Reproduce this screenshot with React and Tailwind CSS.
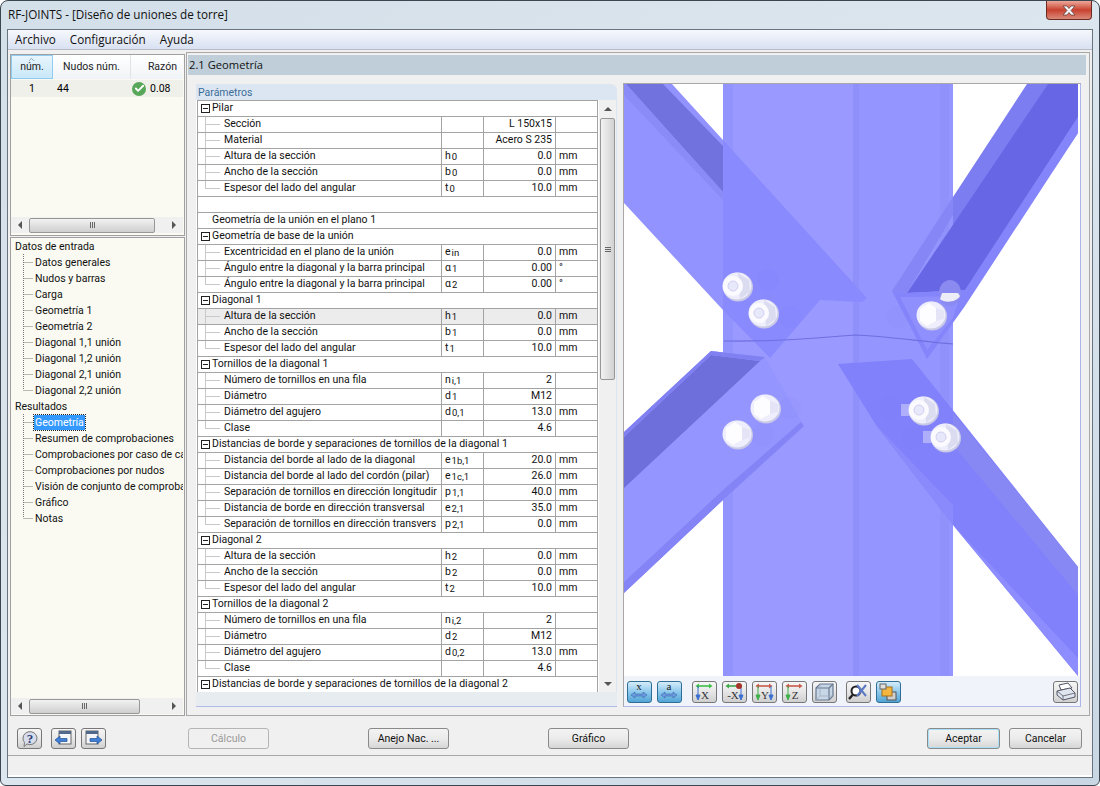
import { Check, ChevronUp } from "lucide-react";

const TREE = [
  { label: "Datos de entrada", root: true },
  { label: "Datos generales" },
  { label: "Nudos y barras" },
  { label: "Carga" },
  { label: "Geometría 1" },
  { label: "Geometría 2" },
  { label: "Diagonal 1,1 unión" },
  { label: "Diagonal 1,2 unión" },
  { label: "Diagonal 2,1 unión" },
  { label: "Diagonal 2,2 unión", last: true },
  { label: "Resultados", root: true },
  { label: "Geometría", active: true },
  { label: "Resumen de comprobaciones" },
  { label: "Comprobaciones por caso de ca" },
  { label: "Comprobaciones por nudos" },
  { label: "Visión de conjunto de comproba" },
  { label: "Gráfico" },
  { label: "Notas", last: true },
];

// kind: g = group header, p = plain text, b = blank, otherwise a parameter row
const ROWS = [
  { kind: "g", name: "Pilar" },
  { name: "Sección", value: "L 150x15" },
  { name: "Material", value: "Acero S 235" },
  { name: "Altura de la sección", s: "h", sub: "0", value: "0.0", unit: "mm" },
  { name: "Ancho de la sección", s: "b", sub: "0", value: "0.0", unit: "mm" },
  { name: "Espesor del lado del angular", s: "t", sub: "0", value: "10.0", unit: "mm", last: true },
  { kind: "b" },
  { kind: "p", name: "Geometría de la unión en el plano 1" },
  { kind: "g", name: "Geometría de base de la unión" },
  { name: "Excentricidad en el plano de la unión", s: "e", sub: "in", value: "0.0", unit: "mm" },
  { name: "Ángulo entre la diagonal y la barra principal", s: "α", sub: "1", value: "0.00", unit: "°" },
  { name: "Ángulo entre la diagonal y la barra principal", s: "α", sub: "2", value: "0.00", unit: "°", last: true },
  { kind: "g", name: "Diagonal 1" },
  { name: "Altura de la sección", s: "h", sub: "1", value: "0.0", unit: "mm", selected: true },
  { name: "Ancho de la sección", s: "b", sub: "1", value: "0.0", unit: "mm" },
  { name: "Espesor del lado del angular", s: "t", sub: "1", value: "10.0", unit: "mm", last: true },
  { kind: "g", name: "Tornillos de la diagonal 1" },
  { name: "Número de tornillos en una fila", s: "n", sub: "i,1", value: "2" },
  { name: "Diámetro", s: "d", sub: "1", value: "M12" },
  { name: "Diámetro del agujero", s: "d", sub: "0,1", value: "13.0", unit: "mm" },
  { name: "Clase", value: "4.6", last: true },
  { kind: "g", name: "Distancias de borde y separaciones de tornillos de la diagonal 1" },
  { name: "Distancia del borde al lado de la diagonal", s: "e", sub: "1b,1", value: "20.0", unit: "mm" },
  { name: "Distancia del borde al lado del cordón (pilar)", s: "e", sub: "1c,1", value: "26.0", unit: "mm" },
  { name: "Separación de tornillos en dirección longitudir", s: "p", sub: "1,1", value: "40.0", unit: "mm" },
  { name: "Distancia de borde en dirección transversal", s: "e", sub: "2,1", value: "35.0", unit: "mm" },
  { name: "Separación de tornillos en dirección transvers", s: "p", sub: "2,1", value: "0.0", unit: "mm", last: true },
  { kind: "g", name: "Diagonal 2" },
  { name: "Altura de la sección", s: "h", sub: "2", value: "0.0", unit: "mm" },
  { name: "Ancho de la sección", s: "b", sub: "2", value: "0.0", unit: "mm" },
  { name: "Espesor del lado del angular", s: "t", sub: "2", value: "10.0", unit: "mm", last: true },
  { kind: "g", name: "Tornillos de la diagonal 2" },
  { name: "Número de tornillos en una fila", s: "n", sub: "i,2", value: "2" },
  { name: "Diámetro", s: "d", sub: "2", value: "M12" },
  { name: "Diámetro del agujero", s: "d", sub: "0,2", value: "13.0", unit: "mm" },
  { name: "Clase", value: "4.6", last: true },
  { kind: "g", name: "Distancias de borde y separaciones de tornillos de la diagonal 2" },
];

const GHOST_NUTS = [
  [768, 280],
  [790, 317],
  [898, 317],
  [790, 408],
  [763, 435],
  [890, 408],
  [913, 438],
];

function HScroll({ thumb }) {
  return (
    <div className="flex h-[16px] shrink-0 items-center bg-[#f0f0f0]">
      <div className="flex w-[18px] justify-center">
        <div className="h-0 w-0 border-y-[4px] border-r-[4px] border-y-transparent border-r-[#555]" />
      </div>
      <div className={`flex h-[15px] items-center justify-center rounded-[2px] border border-[#979797] bg-gradient-to-b from-[#f2f2f2] to-[#cfcfcf] ${thumb}`}>
        <div className="flex gap-[1px]">
          <div className="h-[6px] w-[1px] bg-[#666]" />
          <div className="h-[6px] w-[1px] bg-[#666]" />
          <div className="h-[6px] w-[1px] bg-[#666]" />
        </div>
      </div>
      <div className="ml-auto flex w-[18px] justify-center">
        <div className="h-0 w-0 border-y-[4px] border-l-[4px] border-y-transparent border-l-[#555]" />
      </div>
    </div>
  );
}

function VScroll() {
  return (
    <div className="flex w-[17px] flex-col items-center bg-[#f0f0f0]">
      <div className="flex h-[18px] items-center">
        <div className="h-0 w-0 border-x-[4px] border-b-[4px] border-x-transparent border-b-[#555]" />
      </div>
      <div className="flex h-[262px] w-[15px] flex-col items-center justify-center gap-[1px] rounded-[2px] border border-[#979797] bg-gradient-to-r from-[#f2f2f2] to-[#d2d2d2]">
        <div className="h-[1px] w-[6px] bg-[#666]" />
        <div className="h-[1px] w-[6px] bg-[#666]" />
        <div className="h-[1px] w-[6px] bg-[#666]" />
      </div>
      <div className="mt-auto flex h-[16px] items-center">
        <div className="h-0 w-0 border-x-[4px] border-t-[4px] border-x-transparent border-t-[#555]" />
      </div>
    </div>
  );
}

function TreeItem({ item }) {
  if (item.root) {
    return <div className="h-[16px] pl-[4px] leading-[17px]">{item.label}</div>;
  }
  return (
    <div className="flex h-[16px] items-center whitespace-nowrap leading-[15px]">
      <svg width="23" height="16" className="shrink-0">
        <path d={`M12.5 0V${item.last ? 8 : 16}M12.5 8.5H22`} stroke="#777" strokeDasharray="1 1" fill="none" />
      </svg>
      {item.active ? (
        <span className="bg-[#3399ff] px-[1px] text-white outline outline-1 outline-dotted outline-[#222]">{item.label}</span>
      ) : (
        <span className="px-[1px]">{item.label}</span>
      )}
    </div>
  );
}

function LeftColumn() {
  return (
    <div className="flex w-[175px] shrink-0 flex-col gap-[1px] pt-[2px]">
      <div className="flex h-[182px] shrink-0 flex-col border border-[#a0a0a0] bg-[#fafaf2] pb-[2px] pr-[1px]">
        <div className="flex h-[24px] shrink-0 bg-gradient-to-b from-[#ffffff] to-[#f0f3f7] text-[#222]">
          <div className="relative flex w-[42px] items-end justify-center border border-[#8fcdf0] bg-gradient-to-b from-[#e8f5fc] to-[#c9e8f9] pb-[3px]">
            <ChevronUp size={9} className="absolute left-[15px] top-[-1px] text-[#6b8fa8]" />
            núm.
          </div>
          <div className="flex w-[78px] items-end justify-center border-r border-[#e0e3e8] pb-[4px]">Nudos núm.</div>
          <div className="flex flex-1 items-end justify-end pb-[4px] pr-[6px]">Razón</div>
        </div>
        <div className="mt-[1px] flex h-[17px] shrink-0 items-center bg-[#f0f0ea]">
          <div className="w-[42px] pl-[18px]">1</div>
          <div className="w-[79px] pl-[4px]">44</div>
          <div className="flex h-[14px] w-[14px] items-center justify-center rounded-full bg-[#58a65a]">
            <Check size={11} strokeWidth={4} className="text-white" />
          </div>
          <div className="pl-[4px]">0.08</div>
        </div>
        <div className="flex-1" />
        <HScroll thumb="w-[126px]" />
      </div>
      <div className="flex min-h-0 flex-1 flex-col border border-[#a0a0a0] bg-[#fafaf2] pb-[1px] pr-[1px]">
        <div className="flex-1 overflow-hidden text-[#111]">
          {TREE.map((item) => (
            <TreeItem key={item.label} item={item} />
          ))}
        </div>
        <HScroll thumb="w-[111px]" />
      </div>
    </div>
  );
}

function RowBranch({ last }) {
  return (
    <svg width="26" height="15" className="shrink-0">
      <path d={`M7.5 0V${last ? 8 : 15}M7.5 7.5H22`} stroke="#c9c9c9" fill="none" />
    </svg>
  );
}

function GroupBox() {
  return (
    <svg width="13" height="15" className="shrink-0">
      <rect x="2.5" y="3.5" width="8" height="8" fill="#fff" stroke="#222" />
      <path d="M4 7.5H9" stroke="#222" />
    </svg>
  );
}

function ParamRow({ row }) {
  const base = "h-[16px] border-b border-[#a3a3a3] leading-[14px] whitespace-nowrap overflow-hidden";
  if (row.kind === "b") return <div className={base} />;
  if (row.kind === "p") return <div className={`${base} pl-[14px]`}>{row.name}</div>;
  if (row.kind === "g") {
    return (
      <div className={`${base} flex pl-[1px]`}>
        <GroupBox />
        <span>{row.name}</span>
      </div>
    );
  }
  return (
    <div className={`${base} grid grid-cols-[244px_42px_72px_1fr] ${row.selected ? "bg-[#ececec]" : ""}`}>
      <div className="flex overflow-hidden border-r border-[#a3a3a3]">
        <RowBranch last={row.last} />
        <span>{row.name}</span>
      </div>
      <div className="border-r border-[#a3a3a3] pl-[3px]">
        {row.s}
        {row.sub ? <span className="relative top-[1px] ml-[1px] text-[9.5px]">{row.sub}</span> : null}
      </div>
      <div className="border-r border-[#a3a3a3] pr-[3px] text-right">{row.value}</div>
      <div className="pl-[3px]">{row.unit}</div>
    </div>
  );
}

function ParamPanel() {
  return (
    <div className="flex w-[421px] shrink-0 flex-col">
      <div className="h-[16px] rounded-tr-[6px] bg-[#dce6f2] pl-[2px] leading-[17px] text-[#3b6d98]">Parámetros</div>
      <div className="flex h-[592px] border-r border-r-[#dce6f2] bg-white pl-[1px]">
        <div className="w-[401px] border-x border-t border-[#a3a3a3] text-[#111]">
          {ROWS.map((row, i) => (
            <ParamRow key={i} row={row} />
          ))}
        </div>
        <div className="ml-[1px] flex h-full">
          <VScroll />
        </div>
      </div>
      <div className="h-[15px] border-b border-b-[#b3b8ea] bg-[#e6ecf0]" />
    </div>
  );
}

// head = bolt head seen from the top (hexagon), otherwise the threaded end with nut
function Bolt({ x, y, head }) {
  return (
    <g>
      <ellipse cx={x + 1} cy={y + 1} rx="15" ry="14.5" fill="#c9c9e6" />
      <ellipse cx={x} cy={y} rx="14.5" ry="13.5" fill="#eeeefc" />
      {head ? (
        <g>
          <polygon points={`${x - 11},${y - 6} ${x - 2},${y - 12} ${x + 5},${y - 7} ${x + 5},${y + 6} ${x - 4},${y + 11} ${x - 11},${y + 6}`} fill="#fdfdff" />
          <polygon points={`${x + 5},${y - 7} ${x + 13},${y - 4} ${x + 13},${y + 4} ${x + 5},${y + 6}`} fill="#e4e4f6" />
        </g>
      ) : (
        <g>
          <path d={`M${x + 1} ${y - 13} L${x + 12} ${y - 6} L${x + 13} ${y + 6} L${x + 3} ${y + 13} Z`} fill="#dcdcf0" />
          <circle cx={x - 4} cy={y} r="10" fill="#fbfbff" />
          <circle cx={x - 4} cy={y} r="5" fill="#e8e8fb" stroke="#cfcff2" />
        </g>
      )}
    </g>
  );
}

function Model() {
  return (
    <svg viewBox="624 84 455 592" width="455" height="592" className="block shrink-0 bg-white">
      {/* column */}
      <rect x="723" y="84" width="230" height="592" fill="#9999ff" />
      <rect x="856" y="84" width="97" height="592" fill="#9595ff" />
      <rect x="723" y="84" width="10" height="592" fill="#9393fd" />
      <rect x="853" y="84" width="6" height="592" fill="#9090fb" />
      <rect x="940" y="84" width="9" height="592" fill="#9191fb" />

      {/* upper left diagonal */}
      <polygon points="624,84 672,84 723,140 723,310 624,203" fill="#9393ff" />
      <polygon points="626,84 663,84 723,146 723,192" fill="#7272df" />
      <polygon points="624,84 626,84 723,192 723,200 624,95" fill="#8b8bf8" />
      <polygon points="723,140 867,298 862,302 820,300 770,358 723,310" fill="#8a8aff" />

      {/* upper right diagonal */}
      <polygon points="1027,84 1078,84 1078,133 1000,250 953,320 953,197" fill="#7d7df2" />
      <polygon points="1048,84 1078,84 1078,117 965,290 907,293" fill="#6767e6" />
      <polygon points="1078,117 1078,133 965,306 927,359 892,291 907,293 965,290" fill="#8585fb" />
      <polygon points="900,297 907,297 960,296 953,318 927,350" fill="#8f8ffd" />
      <polygon points="953,197 953,215 907,293 892,291" fill="#8686f6" />

      {/* seam */}
      <path d="M724 341 C770 342 820 338 855 335 C885 336 925 342 953 344" stroke="#6f6fe0" strokeWidth="1.2" fill="none" />

      {/* lower left diagonal */}
      <polygon points="711,351 765,357 804,426 723,500 624,593 624,432" fill="#9595ff" />
      <polygon points="711,355 760,361 624,488 624,437" fill="#6f6fdb" />
      <polygon points="711,351 765,357 760,361 711,355 624,437 624,432" fill="#8080f2" />
      <polygon points="804,426 723,500 624,593 624,582 723,490 801,422" fill="#8484f6" />

      {/* lower right diagonal */}
      <polygon points="838,364 912,359 1078,567 1078,676 953,525 876,425" fill="#8181fc" />
      <polygon points="953,413 1078,567 1078,595 953,445" fill="#8888f4" />
      <polygon points="953,525 1078,658 1078,676" fill="#8d8dff" />
      <polygon points="876,425 953,505 953,525" fill="#8a8afc" />

      {/* nuts showing faintly through the plates */}
      {GHOST_NUTS.map(([x, y]) => (
        <circle key={`${x}-${y}`} cx={x} cy={y} r="11" fill="#6f6ff0" fillOpacity="0.06" />
      ))}

      {/* bolts */}
      <Bolt x={737} y={286} />
      <Bolt x={763} y={313} />
      <ellipse cx="950" cy="293" rx="11" ry="13" fill="#8a8af0" />
      <path d="M940 299 C944 303 956 303 960 296 L958 293 H942 Z" fill="#ededf8" />
      <Bolt x={931} y={315} head />
      <Bolt x={765} y={408} head />
      <Bolt x={737} y={434} head />
      <rect x="901" y="404" width="10" height="12" fill="#aeaefb" />
      <Bolt x={923} y={410} />
      <rect x="923" y="431" width="10" height="12" fill="#aeaefb" />
      <Bolt x={945} y={437} />
    </svg>
  );
}

function ArrowH({ y }) {
  return (
    <path d={`M3 ${y}L7 ${y - 3}V${y - 1}H15V${y - 3}L19 ${y}L15 ${y + 3}V${y + 1}H7V${y + 3}Z`} fill="#6d9be0" stroke="#2f5aa0" strokeWidth="0.5" />
  );
}

function ToolBtn({ active, children }) {
  const look = active
    ? "border-[#2f6f96] bg-gradient-to-b from-[#d4ecfa] via-[#8cc8ec] to-[#52a4d6]"
    : "border-[#777] bg-gradient-to-b from-[#f6f6f6] via-[#e6e6e6] to-[#cfcfcf]";
  return (
    <div className={`flex h-[22px] w-[25px] shrink-0 items-center justify-center rounded-[3px] border ${look}`}>
      <svg width="23" height="20" viewBox="0 0 23 20">
        {children}
      </svg>
    </div>
  );
}

function AxisIcon({ top, left, right, letter, dot }) {
  return (
    <g>
      <path d="M4 4H18" stroke={top} strokeWidth="1.6" />
      <path d="M16 1.5L19.5 4L16 6.5Z" fill={top} />
      <path d="M6 1.5L2.5 4L6 6.5Z" fill={top} />
      {left ? <path d="M5 4V14M3 13L5 18L7 13Z" stroke={left} fill={left} strokeWidth="1" /> : null}
      {right ? <path d="M18 4V14M16 13L18 18L20 13Z" stroke={right} fill={right} strokeWidth="1" /> : null}
      {dot ? <circle cx="16" cy="4" r="3" fill="#a5352a" /> : null}
      <text x={letter.length > 1 ? 10 : 12} y="16.5" textAnchor="middle" fontFamily="Liberation Serif, serif" fontSize="11" fill="#333">
        {letter}
      </text>
    </g>
  );
}

function Toolbar() {
  return (
    <div className="flex h-[30px] items-start bg-[#f0f4fa] pl-[3px] pr-[1px] pt-[5px]">
      <div className="flex gap-[5px]">
        <ToolBtn active>
          <text x="11" y="7.5" textAnchor="middle" fontFamily="Liberation Serif, serif" fontSize="11" fill="#222">x</text>
          <ArrowH y={13} />
        </ToolBtn>
        <ToolBtn active>
          <text x="11" y="8" textAnchor="middle" fontFamily="Liberation Serif, serif" fontSize="11" fill="#222">a</text>
          <ArrowH y={13} />
        </ToolBtn>
      </div>
      <div className="ml-[10px] flex gap-[5px]">
        <ToolBtn>
          <AxisIcon top="#3fc04a" left="#3b6fd0" letter="X" />
        </ToolBtn>
        <ToolBtn>
          <AxisIcon top="#3fa84a" right="#3b6fd0" letter="-X" dot />
        </ToolBtn>
        <ToolBtn>
          <AxisIcon top="#c85a4a" left="#3fb04a" right="#3b6fd0" letter="Y" />
        </ToolBtn>
        <ToolBtn>
          <AxisIcon top="#c85a4a" left="#3fb04a" letter="Z" />
        </ToolBtn>
        <ToolBtn>
          <path d="M3 6L7 2H20V14L16 18H3Z" fill="#c9d6e6" stroke="#67788f" strokeWidth="1.2" />
          <path d="M3 6H16V18M16 6L20 2" fill="none" stroke="#67788f" strokeWidth="1.2" />
          <path d="M7 2V14H20M7 14L3 18" fill="none" stroke="#9eacbe" strokeWidth="0.8" />
        </ToolBtn>
      </div>
      <div className="ml-[9px] flex gap-[5px]">
        <ToolBtn>
          <circle cx="9" cy="9" r="4.5" fill="#fff" stroke="#222" strokeWidth="2" />
          <path d="M5.5 13L2 17" stroke="#222" strokeWidth="2.4" />
          <path d="M10 3L19 14M19 3L10 14" stroke="#5b78c4" strokeWidth="2" />
        </ToolBtn>
        <ToolBtn active>
          <rect x="10" y="10" width="9" height="8" fill="#cfcfcf" stroke="#555" />
          <rect x="5" y="5" width="10" height="9" fill="#f4b63e" stroke="#a5701c" />
          <rect x="3" y="2" width="6" height="5" fill="#e0e0e0" stroke="#666" />
        </ToolBtn>
      </div>
      <div className="ml-auto pr-[1px]">
        <ToolBtn>
          <path d="M7 8L5 3L14 1L18 6Z" fill="#fff" stroke="#556" />
          <path d="M3 9L16 6L21 11V15L9 18L3 13Z" fill="#dfe6f0" stroke="#556" />
          <path d="M9 18V14L21 11M9 14L3 9" fill="none" stroke="#556" strokeWidth="0.8" />
        </ToolBtn>
      </div>
    </div>
  );
}

function Viewer() {
  return (
    <div className="ml-[6px] mt-[-1px] flex h-[624px] w-[458px] flex-col border-b border-l border-r border-t border-b-[#b3b8ea] border-l-[#a8a8a8] border-r-[#aeb4ec] border-t-[#a8a8a8] bg-white">
      <Model />
      <Toolbar />
    </div>
  );
}

function SmallBtn({ children }) {
  return (
    <div className="flex h-[21px] w-[25px] items-center justify-center rounded-[3px] border border-[#777] bg-gradient-to-b from-[#f6f6f6] via-[#e8e8e8] to-[#cfcfcf]">
      <svg width="21" height="19" viewBox="0 0 21 19">
        {children}
      </svg>
    </div>
  );
}

function Btn({ label, className = "" }) {
  return (
    <div className={`flex h-[21px] items-center justify-center rounded-[3px] border border-[#8a8a8a] bg-gradient-to-b from-[#f3f3f3] via-[#ebebeb] to-[#d6d6d6] text-[#111] ${className}`}>
      {label}
    </div>
  );
}

export default function App() {
  return (
    <div className="flex h-[786px] w-[1100px] flex-col overflow-hidden rounded-t-[8px] rounded-b-[6px] border border-[#3c4650] bg-gradient-to-br from-[#d3dfe9] via-[#dce6ee] to-[#c9d7e4] font-['Roboto',sans-serif] text-[10.5px]">
      <div className="flex h-[28px] shrink-0 font-['Open_Sans',sans-serif] text-[11.7px] text-[#111]">
        <div className="pl-[7px] pt-[5px] leading-[17px]">RF-JOINTS - [Diseño de uniones de torre]</div>
        <div className="ml-auto mr-[7px] flex h-[19px] w-[46px] items-center justify-center rounded-b-[4px] border border-t-0 border-[#6b2a22] bg-gradient-to-b from-[#eca79b] via-[#c8402e] to-[#d9887a]">
          <svg width="16" height="11" viewBox="0 0 16 11">
            <path d="M2 1H6L8 3.5L10 1H14L10 5.5L14 10H10L8 7.5L6 10H2L6 5.5Z" fill="#f2f4f6" stroke="#5a3a38" strokeWidth="0.7" />
          </svg>
        </div>
      </div>
      <div className="mx-[6px] flex min-h-0 flex-1 flex-col border border-[#68747f] bg-[#f0f0f0]">
        <div className="flex h-[20px] shrink-0 items-center gap-[14px] border-b border-[#b8bcc4] bg-gradient-to-b from-[#f6f8fc] to-[#d9e1f2] pl-[7px] font-['Open_Sans',sans-serif] text-[11.7px] text-[#111]">
          <span>Archivo</span>
          <span>Configuración</span>
          <span>Ayuda</span>
        </div>
        <div className="flex h-[667px] shrink-0 gap-[1px] pb-[1px] pl-[2px] pt-[2px]">
          <LeftColumn />
          <div className="flex w-[904px] shrink-0 flex-col border border-[#a8a8a8]">
            <div className="mx-[1px] mt-[2px] h-[20px] w-[898px] shrink-0 bg-[#bfced9] pl-[1px] font-['Open_Sans',sans-serif] text-[11.2px] leading-[19px] text-[#111]">2.1 Geometría</div>
            <div className="flex pl-[9px] pt-[9px]">
              <ParamPanel />
              <Viewer />
            </div>
          </div>
        </div>
        <div className="flex h-[39px] shrink-0 items-start border-b border-[#a8a8a8] pl-[9px] pr-[10px] pt-[11px]">
          <SmallBtn>
            <path d="M4 9a7 6.5 0 1 1 4 6l-3 2.5 .5-4A7 6.5 0 0 1 4 9Z" fill="#d6dceb" stroke="#777" />
            <text x="11" y="14" textAnchor="middle" fontFamily="Liberation Serif, serif" fontWeight="700" fontSize="13" fill="#2c3f78">?</text>
          </SmallBtn>
          <div className="ml-[9px] flex gap-[5px]">
            <SmallBtn>
              <rect x="6" y="2" width="12" height="13" fill="#f4f6fa" stroke="#666" />
              <rect x="6" y="2" width="12" height="3" fill="#50688c" />
              <path d="M2 11L7 7V9.5H14V12.5H7V15Z" fill="#3f7fd8" stroke="#24508f" strokeWidth="0.7" />
            </SmallBtn>
            <SmallBtn>
              <rect x="3" y="2" width="12" height="13" fill="#f4f6fa" stroke="#666" />
              <rect x="3" y="2" width="12" height="3" fill="#50688c" />
              <path d="M19 11L14 7V9.5H7V12.5H14V15Z" fill="#3f7fd8" stroke="#24508f" strokeWidth="0.7" />
            </SmallBtn>
          </div>
          <div className="ml-[82px] flex h-[21px] w-[81px] items-center justify-center rounded-[3px] border border-[#b5b5b5] bg-[#f0f0f0] text-[#9a9a9a]">Cálculo</div>
          <Btn label="Anejo Nac. ..." className="ml-[99px] w-[81px]" />
          <Btn label="Gráfico" className="ml-[99px] w-[81px]" />
          <div className="ml-auto flex gap-[9px]">
            <Btn label="Aceptar" className="w-[73px] border-[#2f9fd8] shadow-[inset_0_0_0_1px_#a8e0f8]" />
            <Btn label="Cancelar" className="w-[73px]" />
          </div>
        </div>
        <div className="flex-1 border-b-[2px] border-b-white" />
      </div>
      <div className="h-[7px] shrink-0" />
    </div>
  );
}
